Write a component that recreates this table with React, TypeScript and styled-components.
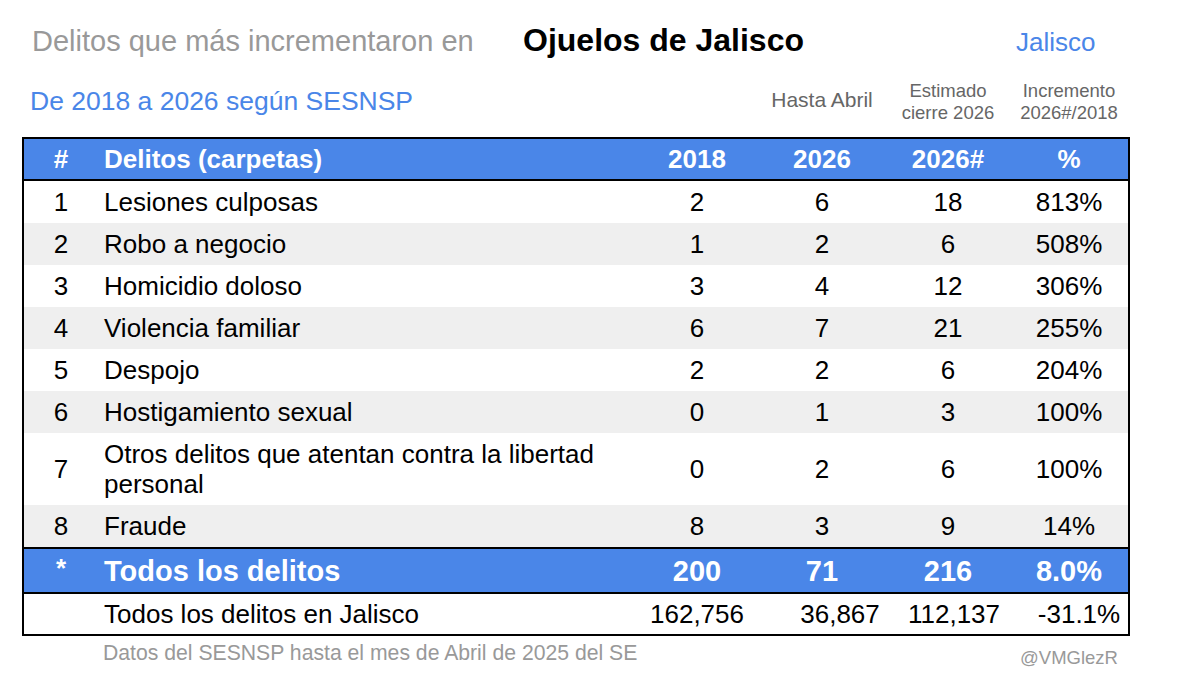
import React from "react";
import styled, { createGlobalStyle } from "styled-components";

const BLUE = "#4a86e8";
const COLS = "74px 538px 122px 128px 124px 118px";

const GlobalStyle = createGlobalStyle`
  html, body {
    margin: 0;
    padding: 0;
    background: #fff;
  }
  body {
    font-family: "Liberation Sans", Arial, sans-serif;
    color: #000;
  }
`;

const Page = styled.div`
  width: 1108px;
  padding: 24px 0 0 22px;
`;

const TitleRow = styled.div`
  display: flex;
  align-items: baseline;
  height: 48px;
  padding-left: 10px;
  line-height: 1;
  white-space: nowrap;
`;

const Lead = styled.span`
  width: 491px;
  font-size: 29px;
  color: #999;
`;

const Place = styled.span`
  width: 493px;
  font-size: 32px;
  font-weight: 700;
`;

const State = styled.span`
  font-size: 26px;
  color: ${BLUE};
`;

const SubRow = styled.div`
  display: grid;
  grid-template-columns: ${COLS};
  align-items: start;
  height: 65px;
  padding-left: 2px;
`;

const Subtitle = styled.div`
  grid-column: 1 / 3;
  margin-left: -2px;
  padding: 14px 0 0 8px;
  font-size: 26.5px;
  line-height: 30px;
  color: ${BLUE};
  white-space: nowrap;
`;

const ColNote = styled.div<{ $col: number; $top: number; $size: number; $lh: number }>`
  grid-column: ${(p) => p.$col};
  padding-top: ${(p) => p.$top}px;
  font-size: ${(p) => p.$size}px;
  line-height: ${(p) => p.$lh}px;
  color: #666;
  text-align: center;
  white-space: nowrap;
`;

const Table = styled.div`
  border: 2px solid #000;
`;

const Row = styled.div<{ $h: number; $bg: string; $rules?: boolean }>`
  display: grid;
  grid-template-columns: ${COLS};
  align-items: center;
  height: ${(p) => p.$h}px;
  background: ${(p) => p.$bg};
  border-top: ${(p) => (p.$rules ? "2px solid #000" : "none")};
  border-bottom: ${(p) => (p.$rules ? "2px solid #000" : "none")};
  font-size: 26px;
  line-height: 30px;
`;

const HeadRow = styled(Row)`
  border-top: none;
  border-bottom: 2px solid #000;
  color: #fff;
  font-weight: 700;
`;

const TotalRow = styled(Row)`
  color: #fff;
  font-weight: 700;
  font-size: 29px;
`;

const Cell = styled.div<{ $shift?: number }>`
  text-align: center;
  white-space: nowrap;
  padding-left: ${(p) => (p.$shift ?? 0) * 2}px;
`;

const Star = styled(Cell)`
  font-size: 26px;
  align-self: start;
  padding-top: 4px;
`;

const Name = styled.div`
  padding-left: 6px;
  padding-right: 8px;
`;

const FooterRow = styled.div`
  display: grid;
  grid-template-columns: ${COLS};
  align-items: start;
  padding-left: 2px;
  height: 60px;
`;

const Source = styled.div`
  grid-column: 2;
  white-space: nowrap;
  padding: 3px 0 0 5px;
  font-size: 21.2px;
  line-height: 28px;
  color: #999;
`;

const Handle = styled.div`
  grid-column: 6;
  padding-top: 8px;
  font-size: 18.5px;
  line-height: 28px;
  color: #999;
  text-align: center;
`;

type Crime = {
  n: number;
  name: string;
  y2018: string;
  y2026: string;
  est: string;
  pct: string;
  tall?: boolean;
};

const crimes: Crime[] = [
  { n: 1, name: "Lesiones culposas", y2018: "2", y2026: "6", est: "18", pct: "813%" },
  { n: 2, name: "Robo a negocio", y2018: "1", y2026: "2", est: "6", pct: "508%" },
  { n: 3, name: "Homicidio doloso", y2018: "3", y2026: "4", est: "12", pct: "306%" },
  { n: 4, name: "Violencia familiar", y2018: "6", y2026: "7", est: "21", pct: "255%" },
  { n: 5, name: "Despojo", y2018: "2", y2026: "2", est: "6", pct: "204%" },
  { n: 6, name: "Hostigamiento sexual", y2018: "0", y2026: "1", est: "3", pct: "100%" },
  {
    n: 7,
    name: "Otros delitos que atentan contra la libertad personal",
    y2018: "0",
    y2026: "2",
    est: "6",
    pct: "100%",
    tall: true,
  },
  { n: 8, name: "Fraude", y2018: "8", y2026: "3", est: "9", pct: "14%" },
];

export default function App() {
  return (
    <>
      <GlobalStyle />
      <Page>
        <TitleRow>
          <Lead>Delitos que más incrementaron en</Lead>
          <Place>Ojuelos de Jalisco</Place>
          <State>Jalisco</State>
        </TitleRow>

        <SubRow>
          <Subtitle>De 2018 a 2026 según SESNSP</Subtitle>
          <ColNote $col={4} $top={16} $size={21} $lh={24}>
            Hasta Abril
          </ColNote>
          <ColNote $col={5} $top={8} $size={18.5} $lh={22}>
            Estimado
            <br />
            cierre 2026
          </ColNote>
          <ColNote $col={6} $top={8} $size={18.5} $lh={22}>
            Incremento
            <br />
            2026#/2018
          </ColNote>
        </SubRow>

        <Table>
          <HeadRow $h={40} $bg={BLUE}>
            <Cell>#</Cell>
            <Name>Delitos (carpetas)</Name>
            <Cell>2018</Cell>
            <Cell>2026</Cell>
            <Cell>2026#</Cell>
            <Cell>%</Cell>
          </HeadRow>

          {crimes.map((c) => (
            <Row key={c.n} $h={c.tall ? 72 : 42} $bg={c.n % 2 === 0 ? "#efefef" : "#fff"}>
              <Cell>{c.n}</Cell>
              <Name>{c.name}</Name>
              <Cell>{c.y2018}</Cell>
              <Cell>{c.y2026}</Cell>
              <Cell>{c.est}</Cell>
              <Cell>{c.pct}</Cell>
            </Row>
          ))}

          <TotalRow $h={43} $bg={BLUE} $rules>
            <Star>*</Star>
            <Name>Todos los delitos</Name>
            <Cell>200</Cell>
            <Cell>71</Cell>
            <Cell>216</Cell>
            <Cell>8.0%</Cell>
          </TotalRow>

          <Row $h={40} $bg="#fff">
            <Cell />
            <Name>Todos los delitos en Jalisco</Name>
            <Cell>162,756</Cell>
            <Cell $shift={18}>36,867</Cell>
            <Cell $shift={6}>112,137</Cell>
            <Cell $shift={10}>-31.1%</Cell>
          </Row>
        </Table>

        <FooterRow>
          <Source>Datos del SESNSP hasta el mes de Abril de 2025 del SE</Source>
          <Handle>@VMGlezR</Handle>
        </FooterRow>
      </Page>
    </>
  );
}
